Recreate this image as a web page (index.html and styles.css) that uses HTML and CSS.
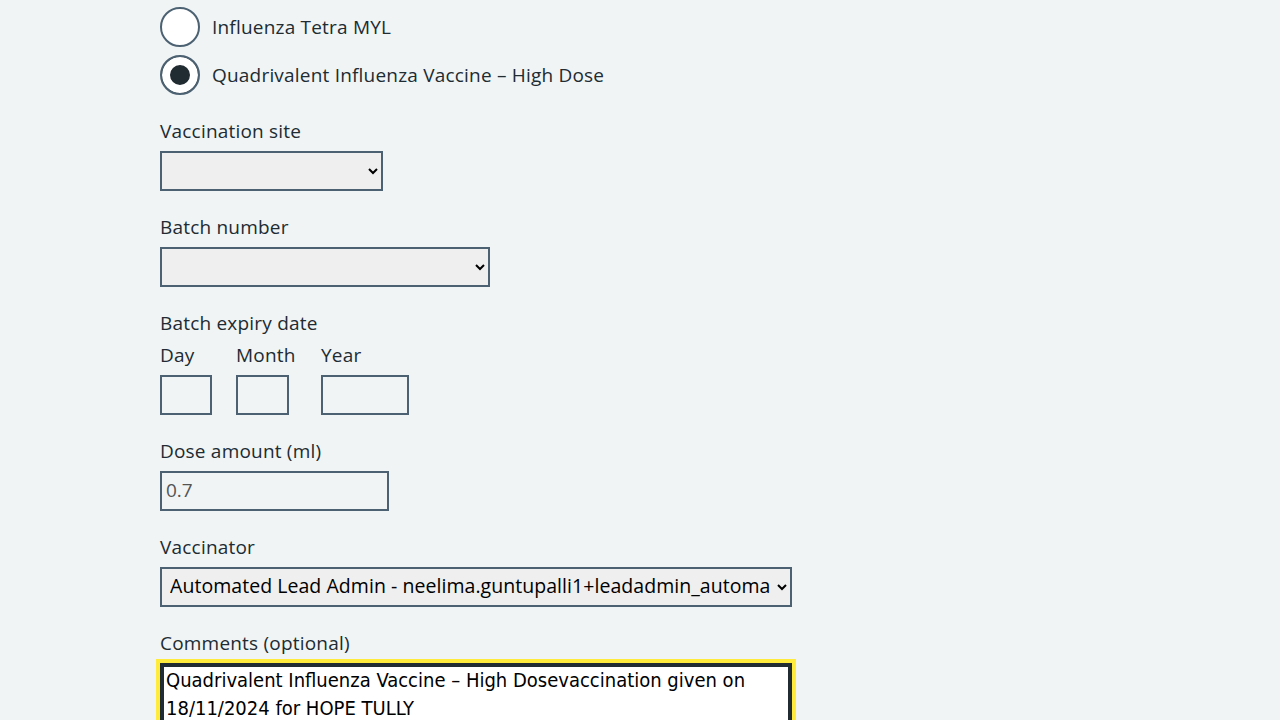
FILE: index.html
```html
<!DOCTYPE html>
<html lang="en">
<head>
<meta charset="utf-8">
<title>Record vaccination</title>
<link rel="stylesheet" href="styles.css">
</head>
<body>
<main class="container">
  <div class="form-group">
    <div class="radios">
      <div class="radio-item">
        <input class="radio-input" type="radio" id="v1" name="vaccine">
        <label class="radio-label" for="v1">Influenza Tetra MYL</label>
      </div>
      <div class="radio-item">
        <input class="radio-input" type="radio" id="v2" name="vaccine" checked>
        <label class="radio-label" for="v2">Quadrivalent Influenza Vaccine – High Dose</label>
      </div>
    </div>
  </div>

  <div class="form-group">
    <label class="label" for="site">Vaccination site</label>
    <select class="select select-site" id="site"><option></option></select>
  </div>

  <div class="form-group">
    <label class="label" for="batch">Batch number</label>
    <select class="select select-batch" id="batch"><option></option></select>
  </div>

  <div class="form-group">
    <fieldset class="fieldset">
      <legend class="legend">Batch expiry date</legend>
      <div class="date-input">
        <div class="date-item">
          <label class="label" for="day">Day</label>
          <input class="input input-day" id="day" type="text">
        </div>
        <div class="date-item date-item-month">
          <label class="label" for="month">Month</label>
          <input class="input input-month" id="month" type="text">
        </div>
        <div class="date-item">
          <label class="label" for="year">Year</label>
          <input class="input input-year" id="year" type="text">
        </div>
      </div>
    </fieldset>
  </div>

  <div class="form-group">
    <label class="label" for="dose">Dose amount (ml)</label>
    <input class="input input-dose" id="dose" type="text" value="0.7" readonly>
  </div>

  <div class="form-group">
    <label class="label" for="vaccinator">Vaccinator</label>
    <select class="select select-vaccinator" id="vaccinator">
      <option>Automated Lead Admin - neelima.guntupalli1+leadadmin_automation@nhs.net</option>
    </select>
  </div>

  <div class="form-group">
    <label class="label" for="comments">Comments (optional)</label>
    <textarea class="textarea" id="comments" rows="4">Quadrivalent Influenza Vaccine – High Dosevaccination given on 18/11/2024 for HOPE TULLY</textarea>
  </div>
</main>
</body>
</html>
```

FILE: styles.css
```css
html, body {
  margin: 0;
  padding: 0;
  background: #f0f4f5;
}

body {
  font-family: "Open Sans", "Noto Sans", "Liberation Sans", sans-serif;
  font-size: 19px;
  line-height: 28px;
  letter-spacing: 0.2px;
  color: #212b32;
}

.container {
  max-width: 960px;
  margin: 0 auto;
  padding-top: 7px;
}

.form-group {
  margin-bottom: 24px;
}

.radios {
  display: flex;
  flex-direction: column;
  gap: 8px;
}

.radio-item {
  display: flex;
  align-items: center;
  gap: 12px;
}

.radio-input {
  appearance: none;
  -webkit-appearance: none;
  margin: 0;
  width: 40px;
  height: 40px;
  box-sizing: border-box;
  border: 2px solid #4c6272;
  border-radius: 50%;
  background: #ffffff;
  flex: none;
}

.radio-input:checked {
  background: #212b32;
  box-shadow: inset 0 0 0 8px #ffffff;
}

.radio-label {
  display: block;
  padding: 6px 0;
}

.label,
.legend {
  display: block;
  line-height: 24px;
  margin: 0 0 8px;
}

.fieldset {
  border: 0;
  margin: 0;
  padding: 0;
  min-width: 0;
}

.legend {
  padding: 0;
}

.select {
  display: block;
  box-sizing: border-box;
  height: 40px;
  border: 2px solid #4c6272;
  border-radius: 0;
  background-color: #efefef;
  font-family: "Open Sans", "Noto Sans", "Liberation Sans", sans-serif;
  font-size: 19.5px;
  letter-spacing: 0.05px;
  line-height: 24px;
  color: #000000;
  padding: 0 4px 3px 4px;
  margin: 0;
}

.select-site { width: 223px; }
.select-batch { width: 330px; }
.select-vaccinator { width: 632px; }

.date-input {
  display: flex;
  gap: 24px;
}

.date-item {
  display: flex;
  flex-direction: column;
}

.date-item-month {
  min-width: 61px;
}

.input {
  display: block;
  box-sizing: border-box;
  height: 40px;
  border: 2px solid #4c6272;
  border-radius: 0;
  background: transparent;
  font-family: "Open Sans", "Noto Sans", "Liberation Sans", sans-serif;
  font-size: 19px;
  padding: 2px 4px 4px;
  margin: 0;
  color: #212b32;
}

.input-day { width: 52px; }
.input-month { width: 53px; }
.input-year { width: 88px; }
.input-dose {
  width: 229px;
  color: #545454;
}

.textarea {
  display: block;
  box-sizing: border-box;
  width: 632px;
  height: 120px;
  border: 2px solid #212b32;
  box-shadow: inset 0 0 0 2px #212b32;
  outline: 4px solid #ffeb3b;
  outline-offset: 0;
  border-radius: 0;
  background: #ffffff;
  color: #000000;
  font-family: "Liberation Sans Narrow", "DejaVu Sans Condensed", "Open Sans", sans-serif;
  font-stretch: condensed;
  font-size: 20px;
  line-height: 28px;
  padding: 1px 2px 2px 4px;
  margin: 0;
  resize: none;
}
```
